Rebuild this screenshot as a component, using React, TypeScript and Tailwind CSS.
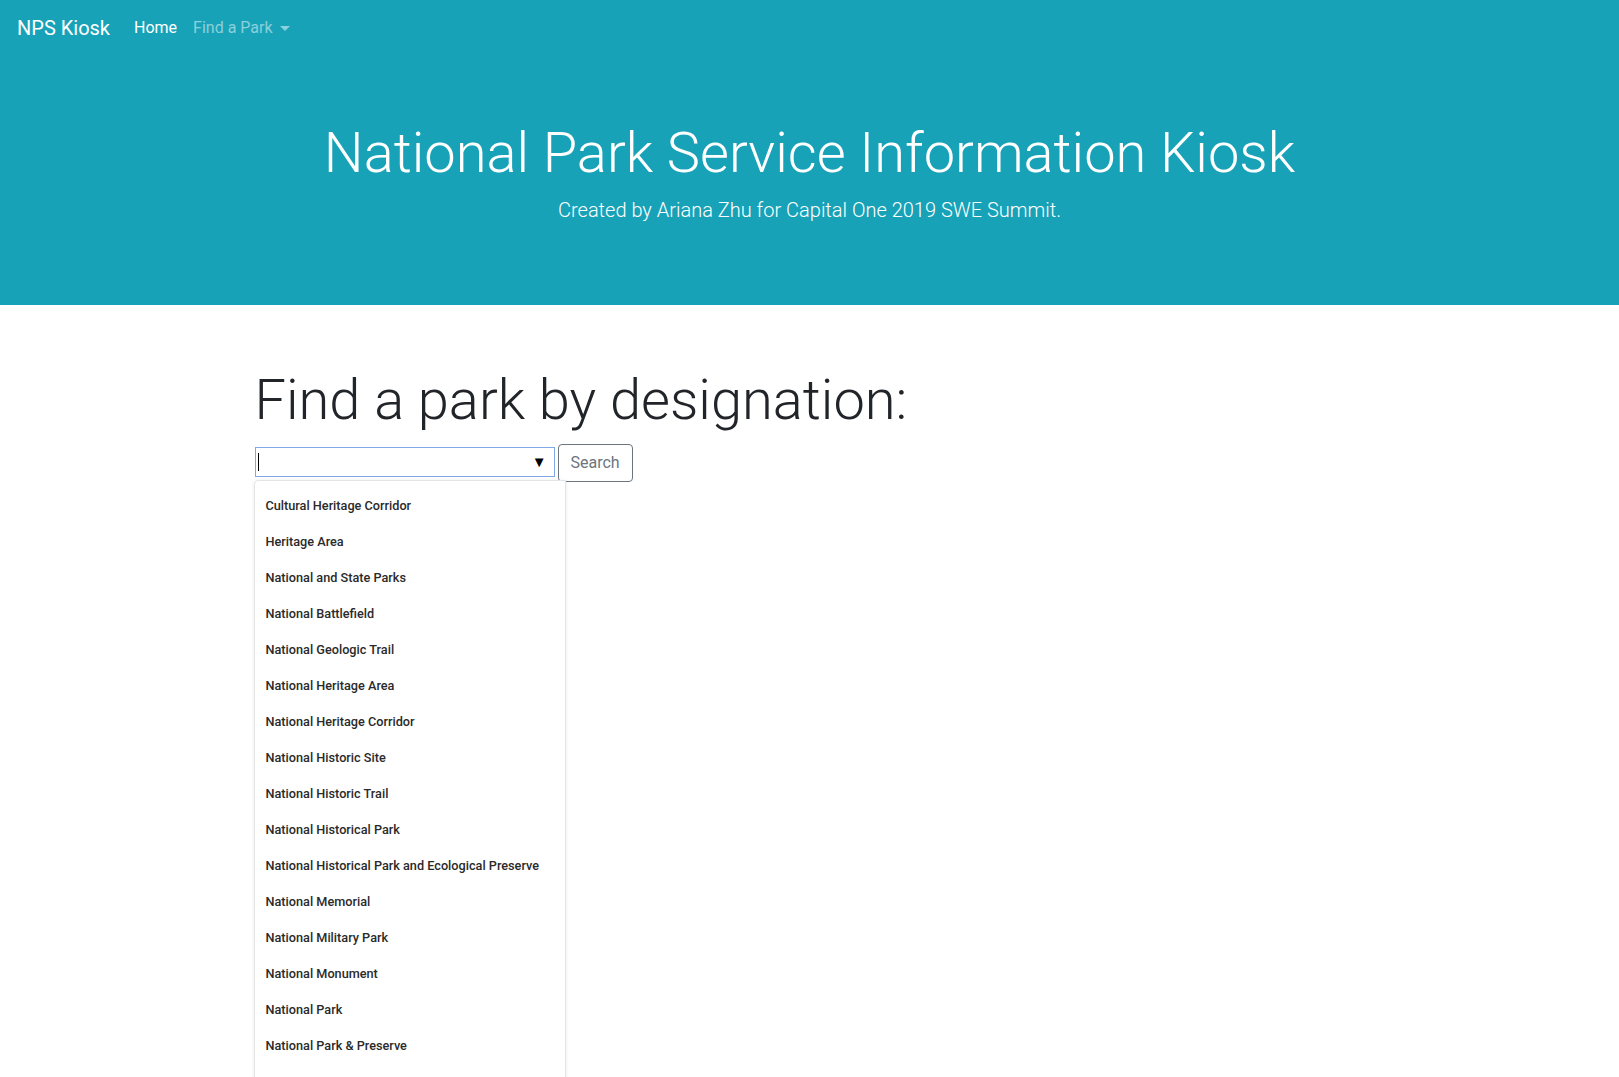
const designations = [
  "Cultural Heritage Corridor",
  "Heritage Area",
  "National and State Parks",
  "National Battlefield",
  "National Geologic Trail",
  "National Heritage Area",
  "National Heritage Corridor",
  "National Historic Site",
  "National Historic Trail",
  "National Historical Park",
  "National Historical Park and Ecological Preserve",
  "National Memorial",
  "National Military Park",
  "National Monument",
  "National Park",
  "National Park & Preserve",
];

function Navbar() {
  return (
    <nav className="flex h-14 items-center bg-[#17a2b8] pl-[17px] pr-4">
      <span className="mr-4 text-[20px] leading-[30px] text-white">NPS Kiosk</span>
      <a className="px-2 text-base text-white">Home</a>
      <a className="flex items-center px-2 text-base text-white/50">
        Find a Park
        <span className="ml-[7px] mt-[1px] h-0 w-0 border-x-[5px] border-t-[5px] border-x-transparent border-t-white/50" />
      </a>
    </nav>
  );
}

function Jumbotron() {
  return (
    <div className="bg-[#17a2b8] px-8 pb-16 pt-16 text-center text-white">
      <h1 className="mb-2 text-[56px] font-light leading-[1.2]">
        National Park Service Information Kiosk
      </h1>
      <p className="mb-4 text-[20px] font-light leading-[30px]">
        Created by Ariana Zhu for Capital One 2019 SWE Summit.
      </p>
    </div>
  );
}

export default function App() {
  return (
    <div
      className="h-screen overflow-hidden bg-white text-[#212529]"
      style={{ fontFamily: "Roboto, 'Liberation Sans', sans-serif" }}
    >
      <Navbar />
      <Jumbotron />

      <div className="mx-auto mt-[62px] w-[1140px] px-[15px]">
        <h1 className="mb-[10px] text-[56px] font-light leading-[1.2]">
          Find a park by designation:
        </h1>

        <div className="flex items-start gap-[3px]">
          <div className="relative">
            <div className="mt-[3px] flex h-[30px] w-[300px] items-center border-[1.5px] border-[#7fa8e6] px-[2px]">
              <span className="h-[18px] w-px bg-black" />
              <span className="ml-auto mr-[5px] text-[15px] leading-none text-black">▼</span>
            </div>

            <ul className="absolute left-[-1px] top-[36px] h-[700px] w-[312px] rounded-tl-[4px] border border-[#e4e4e4] bg-white pt-[6px] shadow-[0_1px_4px_rgba(0,0,0,0.08)]">
              {designations.map((d) => (
                <li
                  key={d}
                  className="flex h-9 items-center pl-[11px] pr-3 text-[12.7px] font-medium text-[#2a2a2a]"
                >
                  {d}
                </li>
              ))}
            </ul>
          </div>

          <button
            type="button"
            className="h-[38px] rounded-[4px] border border-[#6c757d] px-3 text-base text-[#6c757d]"
          >
            Search
          </button>
        </div>
      </div>
    </div>
  );
}
